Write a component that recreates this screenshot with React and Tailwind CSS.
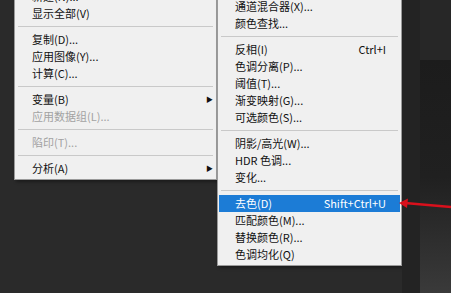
import React from 'react'

const leftItems = [
  { label: '新建(N)...' },
  { label: '显示全部(V)' },
  { sep: true },
  { label: '复制(D)...' },
  { label: '应用图像(Y)...' },
  { label: '计算(C)...' },
  { sep: true },
  { label: '变量(B)', sub: true },
  { label: '应用数据组(L)...', disabled: true },
  { sep: true },
  { label: '陷印(T)...', disabled: true },
  { sep: true },
  { label: '分析(A)', sub: true },
]

const rightItems = [
  { label: '通道混合器(X)...' },
  { label: '颜色查找...' },
  { sep: true },
  { label: '反相(I)', key: 'Ctrl+I' },
  { label: '色调分离(P)...' },
  { label: '阈值(T)...' },
  { label: '渐变映射(G)...' },
  { label: '可选颜色(S)...' },
  { sep: true },
  { label: '阴影/高光(W)...' },
  { label: 'HDR 色调...' },
  { label: '变化...' },
  { sep: true },
  { label: '去色(D)', key: 'Shift+Ctrl+U', active: true },
  { label: '匹配颜色(M)...' },
  { label: '替换颜色(R)...' },
  { label: '色调均化(Q)' },
]

const MenuItem = ({ item }) => {
  if (item.sep) {
    return (
      <div className="h-[9px] flex items-center px-[2px]">
        <div className="w-full h-px bg-[#c9c9c9]"></div>
      </div>
    )
  }
  let color = 'text-[#111]'
  if (item.disabled) color = 'text-[#a2a2a2]'
  if (item.active) color = 'text-white bg-[#1c7cd6]'
  return (
    <div className={`h-[17px] flex items-center pl-[16px] pr-[14px] ${color}`}>
      <span>{item.label}</span>
      {item.key && <span className="ml-auto">{item.key}</span>}
      {item.sub && <span className="ml-auto -mr-[12px] text-[7px] text-[#111]">▶</span>}
    </div>
  )
}

const Menu = ({ items, className }) => {
  return (
    <div className={`bg-[#f0f0f0] border border-[#9a9a9a] px-px pb-[2px] shadow-[2px_2px_3px_rgba(0,0,0,0.35)] text-[11px] leading-none ${className}`}>
      {items.map((item, i) => (
        <MenuItem key={i} item={item} />
      ))}
    </div>
  )
}

export default function App() {
  return (
    <div
      className="relative w-[451px] h-[293px] overflow-hidden bg-[#2a2a2a] flex items-start pl-[14px]"
      style={{ fontFamily: '"Noto Sans CJK SC", "Noto Sans", sans-serif' }}
    >
      <Menu items={leftItems} className="w-[203px] -mt-[13px] shrink-0" />
      <Menu items={rightItems} className="w-[185px] -mt-[3px] shrink-0" />
      <div className="self-stretch flex-1 flex">
        <div className="w-[18px] bg-[#232323]"></div>
        <div className="flex-1 flex flex-col">
          <div className="h-[60px] bg-[#272727]"></div>
          <div className="flex-1 bg-gradient-to-b from-[#1c1c1c] via-[#202020] to-[#3a3a3a]"></div>
        </div>
      </div>

      <svg className="absolute left-[395px] top-[193px]" width="56" height="22" viewBox="0 0 56 22">
        <line x1="10" y1="10" x2="56" y2="14" stroke="#d8101c" strokeWidth="2.5" />
        <polygon points="4,10 13,5.5 12,15" fill="#d8101c" />
      </svg>
    </div>
  )
}
